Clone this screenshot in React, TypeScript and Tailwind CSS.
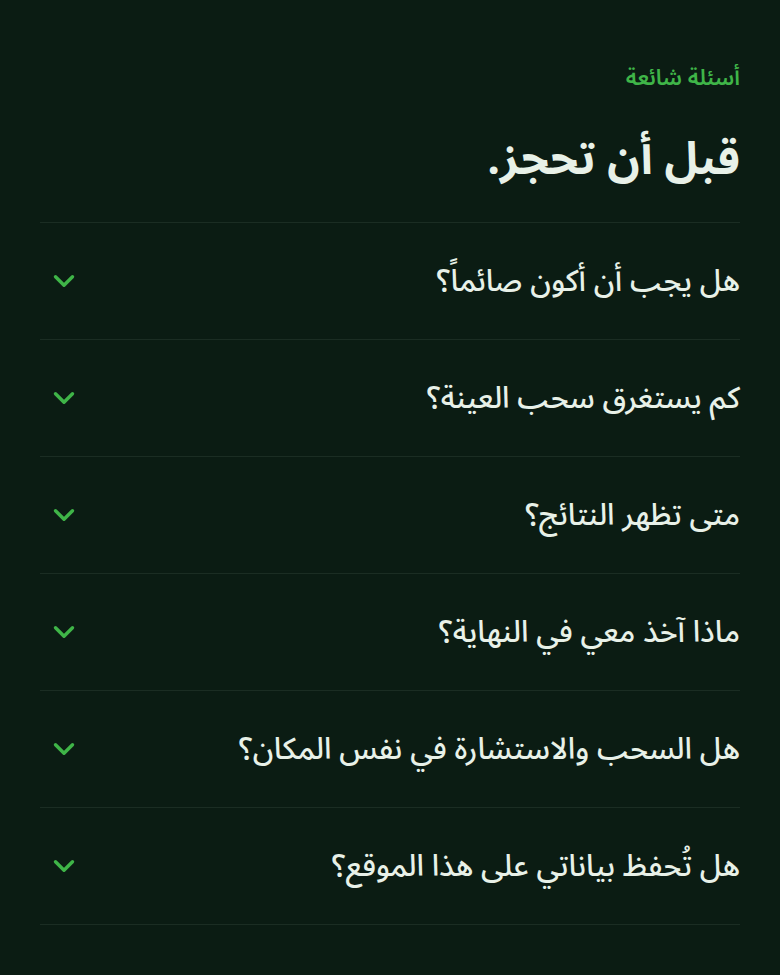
import { ChevronDown } from 'lucide-react';

const QUESTIONS = [
  'هل يجب أن أكون صائماً؟',
  'كم يستغرق سحب العينة؟',
  'متى تظهر النتائج؟',
  'ماذا آخذ معي في النهاية؟',
  'هل السحب والاستشارة في نفس المكان؟',
  'هل تُحفظ بياناتي على هذا الموقع؟',
];

export default function App() {
  return (
    <div
      dir="rtl"
      className="min-h-[975px] bg-[#0b1c13] px-10 pt-[60px]"
      style={{ fontFamily: '"Noto Sans Arabic", "Noto Sans Arabic UI", "Noto Kufi Arabic", "Noto Sans", sans-serif' }}
    >
      <p className="text-[22px] font-semibold text-[#3fb548] leading-[36px]">أسئلة شائعة</p>
      <h1 className="mt-[36px] text-[45px] font-bold text-[#e8f1e8] leading-[56px]">قبل أن تحجز.</h1>

      <div className="mt-[34px] border-t border-[#1b2d23]">
        {QUESTIONS.map((q) => (
          <button
            key={q}
            className="flex h-[117px] w-full items-center justify-between border-b border-[#1b2d23] pl-[7px] text-right"
          >
            <span className="text-[30px] font-medium text-[#e8f1e8]">{q}</span>
            <ChevronDown size={34} strokeWidth={2.4} className="text-[#3fb548]" />
          </button>
        ))}
      </div>
    </div>
  );
}
